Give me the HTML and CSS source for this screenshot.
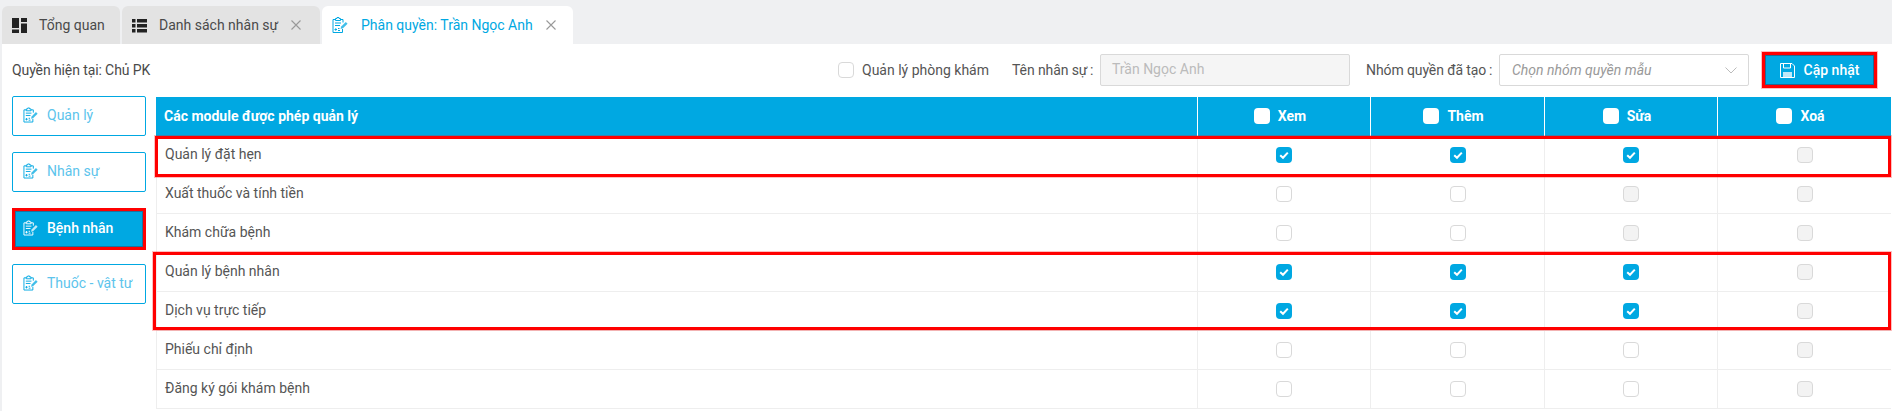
FILE: index.html
```html
<!DOCTYPE html>
<html lang="vi">
<head>
<meta charset="utf-8">
<title>Phân quyền</title>
<link rel="stylesheet" href="styles.css">
</head>
<body>
<svg class="defs" width="0" height="0" aria-hidden="true">
  <symbol id="clip" viewBox="0 0 16 16">
    <path d="M3.500 2.500H1V15.500H10.500V12M8.500 2.500H11V5.500" fill="none" stroke="currentColor" stroke-width="1"/>
    <path d="M3.500 3.500V1.500H5V.5H7V1.500H8.500V3.500Z" fill="none" stroke="currentColor" stroke-width="1"/>
    <path d="M3 6H9M3 8.500H8M6 11.500H7.500M6 13.500H8" stroke="currentColor" stroke-width="1"/>
    <path d="M2.500 12.500H5M3.750 11.250V13.750" stroke="currentColor" stroke-width="1"/>
    <path d="M8.500 12L9.200 9.500L13.800 4.900L15.600 6.700L11 11.300Z" fill="currentColor" fill-opacity=".75"/>
  </symbol>
  <symbol id="check" viewBox="0 0 16 16">
    <path d="M4.200 8.200L7 10.800L11.800 5.600" fill="none" stroke="#fff" stroke-width="2"/>
  </symbol>
</svg>

<nav class="tabs">
  <div class="tab">
    <svg class="tab-icon" viewBox="0 0 15 15"><path d="M0 0H7V10H0ZM0 11.500H7V15H0ZM9 0H15V4H9ZM9 5.500H15V15H9Z" fill="#222"/></svg>
    <span>Tổng quan</span>
  </div>
  <div class="tab">
    <svg class="tab-icon" viewBox="0 0 15 15"><path d="M0 1H3.500V4.500H0ZM5 1H15V4.500H5ZM0 6H3.500V9.500H0ZM5 6H15V9.500H5ZM0 11H3.500V14.500H0ZM5 11H15V14.500H5Z" fill="#222"/></svg>
    <span>Danh sách nhân sự</span>
    <svg class="tab-close" viewBox="0 0 10 10"><path d="M.5 .5L9.500 9.500M9.500 .5L.5 9.500" stroke="#999" stroke-width="1.100"/></svg>
  </div>
  <div class="tab tab-active">
    <svg class="tab-icon tab-icon-clip"><use href="#clip"/></svg>
    <span>Phân quyền: Trần Ngọc Anh</span>
    <svg class="tab-close" viewBox="0 0 10 10"><path d="M.5 .5L9.500 9.500M9.500 .5L.5 9.500" stroke="#999" stroke-width="1.100"/></svg>
  </div>
</nav>

<main class="content">
  <header class="toolbar">
    <div class="current-role">Quyền hiện tại: Chủ PK</div>
    <label class="clinic-check"><span class="box box-plain"></span>Quản lý phòng khám</label>
    <span class="field-label label-name">Tên nhân sự&#8201;:</span>
    <div class="input">Trần Ngọc Anh</div>
    <span class="field-label label-group">Nhóm quyền đã tạo&#8201;:</span>
    <div class="select">
      <span>Chọn nhóm quyền mẫu</span>
      <svg class="chevron" viewBox="0 0 12 7"><path d="M.5 .5L6 6L11.500 .5" fill="none" stroke="#bbb" stroke-width="1"/></svg>
    </div>
    <button class="save" type="button">
      <svg class="save-icon" viewBox="0 0 15 15"><path d="M.5 .5H12L14.500 3V14.500H.5Z" fill="none" stroke="#fff"/><path d="M3.500 .5V5H10.500V.5" fill="none" stroke="#fff"/><path d="M3 9H12V14.500H3Z" fill="#fff" fill-opacity=".75"/></svg>
      Cập nhật
    </button>
  </header>

  <div class="body">
    <aside class="modules">
      <button class="module" type="button"><svg class="module-icon"><use href="#clip"/></svg>Quản lý</button>
      <button class="module" type="button"><svg class="module-icon"><use href="#clip"/></svg>Nhân sự</button>
      <button class="module module-active" type="button"><svg class="module-icon"><use href="#clip"/></svg>Bệnh nhân</button>
      <button class="module" type="button"><svg class="module-icon"><use href="#clip"/></svg>Thuốc - vật tư</button>
    </aside>

    <section class="grid-wrap">
      <div class="grid">
        <div class="head first">Các module được phép quản lý</div>
        <div class="head"><span class="box box-head"></span>Xem</div>
        <div class="head"><span class="box box-head"></span>Thêm</div>
        <div class="head"><span class="box box-head"></span>Sửa</div>
        <div class="head"><span class="box box-head"></span>Xoá</div>

        <div class="cell first">Quản lý đặt hẹn</div>
        <div class="cell"><span class="box box-on"><svg><use href="#check"/></svg></span></div>
        <div class="cell"><span class="box box-on"><svg><use href="#check"/></svg></span></div>
        <div class="cell"><span class="box box-on"><svg><use href="#check"/></svg></span></div>
        <div class="cell"><span class="box box-off"></span></div>

        <div class="cell first">Xuất thuốc và tính tiền</div>
        <div class="cell"><span class="box box-plain"></span></div>
        <div class="cell"><span class="box box-plain"></span></div>
        <div class="cell"><span class="box box-off"></span></div>
        <div class="cell"><span class="box box-off"></span></div>

        <div class="cell first">Khám chữa bệnh</div>
        <div class="cell"><span class="box box-plain"></span></div>
        <div class="cell"><span class="box box-plain"></span></div>
        <div class="cell"><span class="box box-off"></span></div>
        <div class="cell"><span class="box box-off"></span></div>

        <div class="cell first">Quản lý bệnh nhân</div>
        <div class="cell"><span class="box box-on"><svg><use href="#check"/></svg></span></div>
        <div class="cell"><span class="box box-on"><svg><use href="#check"/></svg></span></div>
        <div class="cell"><span class="box box-on"><svg><use href="#check"/></svg></span></div>
        <div class="cell"><span class="box box-off"></span></div>

        <div class="cell first">Dịch vụ trực tiếp</div>
        <div class="cell"><span class="box box-on"><svg><use href="#check"/></svg></span></div>
        <div class="cell"><span class="box box-on"><svg><use href="#check"/></svg></span></div>
        <div class="cell"><span class="box box-on"><svg><use href="#check"/></svg></span></div>
        <div class="cell"><span class="box box-off"></span></div>

        <div class="cell first">Phiếu chỉ định</div>
        <div class="cell"><span class="box box-plain"></span></div>
        <div class="cell"><span class="box box-plain"></span></div>
        <div class="cell"><span class="box box-plain"></span></div>
        <div class="cell"><span class="box box-off"></span></div>

        <div class="cell first">Đăng ký gói khám bệnh</div>
        <div class="cell"><span class="box box-plain"></span></div>
        <div class="cell"><span class="box box-plain"></span></div>
        <div class="cell"><span class="box box-plain"></span></div>
        <div class="cell"><span class="box box-off"></span></div>
      </div>
      <div class="mark mark-one"></div>
      <div class="mark mark-two"></div>
    </section>
  </div>
</main>
</body>
</html>
```
FILE: styles.css
```css
* { box-sizing: border-box; }
html, body { margin: 0; height: 100%; overflow: hidden; }
body {
  background: #eff0f2;
  font-family: Roboto, "Liberation Sans", sans-serif;
  font-size: 14px;
  color: #555;
}
.defs { position: absolute; }

.tabs { display: flex; gap: 2px; height: 44px; padding: 6px 0 0 2px; }
.tab {
  display: flex;
  align-items: center;
  height: 38px;
  padding: 0 0 0 10px;
  background: #e3e3e3;
  border-radius: 6px 6px 0 0;
  color: #4a4a4a;
}
.tab:nth-child(1) { width: 118px; }
.tab:nth-child(2) { width: 198px; }
.tab-active { width: 251px; background: #fff; color: #00a8e2; }
.tab-icon { width: 15px; height: 15px; margin-right: 12px; flex: none; }
.tab-icon-clip { width: 16px; height: 16px; margin-right: 13px; color: #00a8e2; }
.tab-close { width: 10px; height: 10px; margin-left: 13px; flex: none; }

.content { background: #fff; margin-left: 2px; height: 367px; padding: 0 1px 0 10px; }

.toolbar { display: flex; align-items: center; height: 52px; }
.current-role { width: 826px; color: #4a4a4a; letter-spacing: -.1px; }
.clinic-check { display: flex; align-items: center; gap: 8px; width: 174px; color: #555; }
.field-label { color: #555; letter-spacing: -.1px; }
.label-name { width: 88px; }
.label-group { width: 133px; }
.input {
  width: 250px;
  height: 32px;
  margin-right: 16px;
  padding: 0 11px;
  line-height: 29px;
  background: #f5f5f5;
  border: 1px solid #d9d9d9;
  border-radius: 2px;
  color: #bbb;
}
.select {
  display: flex;
  align-items: center;
  justify-content: space-between;
  width: 250px;
  height: 32px;
  margin-right: 13px;
  padding: 0 11px 0 12px;
  border: 1px solid #d9d9d9;
  border-radius: 2px;
  color: #999;
  font-style: italic;
}
.chevron { width: 12px; height: 7px; }
.save {
  display: flex;
  align-items: center;
  justify-content: center;
  gap: 9px;
  width: 115px;
  height: 36px;
  padding: 0;
  background: #00a8e2;
  border: 3px solid #f00;
  box-shadow: inset 0 0 0 1px rgba(60, 60, 90, .6), 0 0 0 1px rgba(255, 0, 0, .25);
  color: #fff;
  font: 500 14px Roboto, "Liberation Sans", sans-serif;
}
.save-icon { width: 15px; height: 15px; }

.body { display: flex; align-items: flex-start; }
.modules { display: flex; flex-direction: column; width: 144px; flex: none; }
.module {
  display: flex;
  align-items: center;
  gap: 9px;
  width: 134px;
  height: 40px;
  margin-bottom: 16px;
  padding: 0 0 2px 10px;
  background: #fff;
  border: 1px solid #00a8e2;
  border-radius: 2px;
  color: #5cc4ec;
  font: 400 14px Roboto, "Liberation Sans", sans-serif;
}
.module-icon { width: 15px; height: 16px; color: #00a8e2; flex: none; }
.module-active {
  height: 42px;
  margin-bottom: 14px;
  padding-left: 8px;
  background: #00a8e2;
  border: 3px solid #f00;
  border-radius: 0;
  box-shadow: inset 0 0 0 1px rgba(60, 60, 90, .5);
  color: #fff;
  font-weight: 500;
}
.module-active .module-icon { color: #fff; }

.grid-wrap { position: relative; flex: 1; margin-top: 1px; }
.grid {
  display: grid;
  grid-template-columns: 1041px 173px 174px 173px 1fr;
  grid-auto-rows: 39px;
}
.head {
  display: flex;
  align-items: center;
  justify-content: center;
  gap: 8px;
  padding: 0 8px 2px 0;
  background: #00a8e2;
  border-left: 1px solid #fff;
  color: #fff;
  font-weight: 700;
}
.head.first { justify-content: flex-start; padding-left: 8px; border-left: 0; }
.cell {
  display: flex;
  align-items: center;
  justify-content: center;
  border-left: 1px solid #eee;
  border-bottom: 1px solid #eee;
  color: #555;
}
.cell.first { justify-content: flex-start; padding: 0 0 2px 8px; }

.box { display: inline-block; width: 16px; height: 16px; border-radius: 4px; flex: none; }
.box svg { display: block; width: 16px; height: 16px; }
.box-plain { background: #fff; border: 1px solid #d9d9d9; }
.box-off { background: #f3f3f3; border: 1px solid #d9d9d9; }
.box-on { background: #00a8e2; }
.box-head { background: #fff; }

.mark { position: absolute; border: 3px solid #f00; box-shadow: 0 0 0 1px rgba(255, 0, 0, .25); pointer-events: none; }
.mark-one { left: -1px; right: 0; top: 39px; height: 41px; }
.mark-two { left: -3px; right: 0; top: 155px; height: 78px; }
```
